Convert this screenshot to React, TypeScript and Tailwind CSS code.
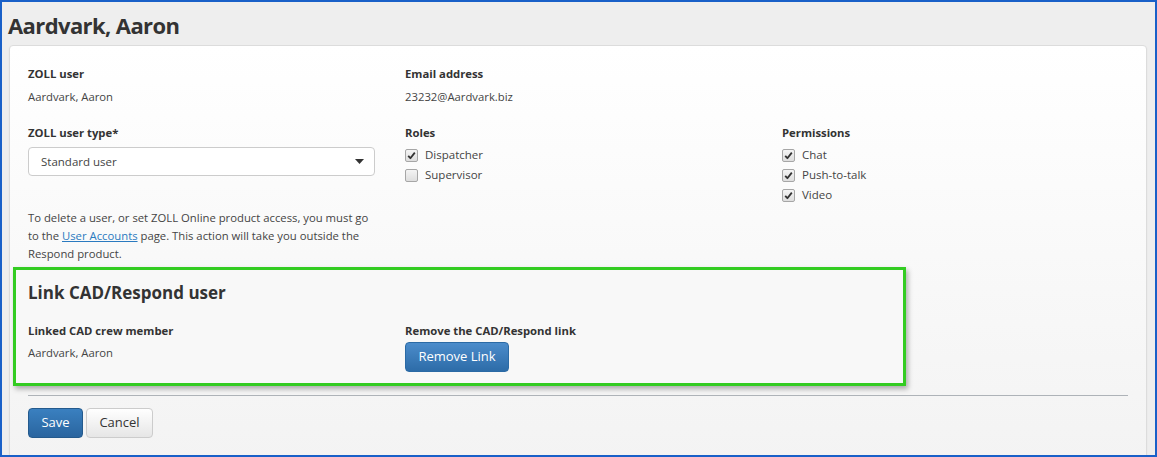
import React from "react";

function Check({ checked }: { checked: boolean }) {
  return (
    <span className="inline-flex h-[13px] w-[13px] items-center justify-center rounded-[2px] border border-[#a6a6a6] bg-gradient-to-b from-[#f4f4f4] to-[#dedede]">
      {checked && (
        <svg width="9" height="9" viewBox="0 0 9 9">
          <path d="M1.2 4.8 L3.4 7.2 L7.8 1.6" fill="none" stroke="#333" strokeWidth="1.8" strokeLinejoin="round" />
        </svg>
      )}
    </span>
  );
}

function CheckRow({ checked, label }: { checked: boolean; label: string }) {
  return (
    <div className="flex h-[20px] items-center gap-[7px]">
      <Check checked={checked} />
      <span className="text-[11.5px] text-[#444]">{label}</span>
    </div>
  );
}

export default function App() {
  return (
    <div
      className="h-[457px] w-[1157px] overflow-hidden border-2 border-[#1960c8] bg-[#eeeeee] text-[#333]"
      style={{ fontFamily: '"Open Sans", "Noto Sans", sans-serif' }}
    >
      <div className="flex h-[43px] items-start pl-[6px] pt-[7px]">
        <h1 className="text-[22px] font-bold leading-[32px] tracking-[-0.6px] text-[#333]">Aardvark, Aaron</h1>
      </div>
      <div className="ml-[7px] mr-[8px] h-[420px] rounded-[4px] border border-[#dcdcdc] bg-gradient-to-b from-white to-[#f3f3f3] pt-[19px] shadow-[0_1px_2px_rgba(0,0,0,0.05)]">
        <div className="grid grid-cols-[377px_377px_1fr] pl-[18px]">
          <div>
            <div className="text-[11.3px] font-bold leading-[18px]">ZOLL user</div>
            <div className="mt-[5px] text-[11.3px] leading-[18px] text-[#444]">Aardvark, Aaron</div>
          </div>
          <div>
            <div className="text-[11.3px] font-bold leading-[18px]">Email address</div>
            <div className="mt-[5px] text-[11.3px] leading-[18px] text-[#444]">23232@Aardvark.biz</div>
          </div>
          <div />
        </div>
        <div className="mt-[18px] grid grid-cols-[377px_377px_1fr] pl-[18px]">
          <div>
            <div className="text-[11.3px] font-bold leading-[18px]">ZOLL user type*</div>
            <div className="mt-[5px] flex h-[29px] w-[347px] items-center justify-between rounded-[4px] border border-[#cccccc] bg-white pl-[12px] pr-[10px]">
              <span className="text-[11.5px] text-[#444]">Standard user</span>
              <svg width="9" height="5" viewBox="0 0 9 5">
                <path d="M0 0 H9 L4.5 5 Z" fill="#333" />
              </svg>
            </div>
            <p className="mt-[33px] w-[345px] text-[11.3px] leading-[18px] text-[#444]">
              To delete a user, or set ZOLL Online product access, you must go to the{" "}
              <a className="text-[#2a7ac0] underline">User Accounts</a> page. This action will take you outside the Respond
              product.
            </p>
          </div>
          <div>
            <div className="text-[11.3px] font-bold leading-[18px]">Roles</div>
            <div className="mt-[3px]">
              <CheckRow checked label="Dispatcher" />
              <CheckRow checked={false} label="Supervisor" />
            </div>
          </div>
          <div>
            <div className="text-[11.3px] font-bold leading-[18px]">Permissions</div>
            <div className="mt-[3px]">
              <CheckRow checked label="Chat" />
              <CheckRow checked label="Push-to-talk" />
              <CheckRow checked label="Video" />
            </div>
          </div>
        </div>

        <div className="ml-[3px] mt-[4px] h-[119px] w-[893px] border-[3px] border-[#33cc22] bg-[#f8f8f8] pl-[12px] pt-[11px] shadow-[2px_3px_5px_rgba(0,0,0,0.3)]">
          <h2 className="text-[17px] font-bold leading-[24px] text-[#333]">Link CAD/Respond user</h2>
          <div className="mt-[17px] grid grid-cols-[377px_1fr]">
            <div>
              <div className="text-[11.3px] font-bold leading-[18px]">Linked CAD crew member</div>
              <div className="mt-[4px] text-[11.3px] leading-[18px] text-[#444]">Aardvark, Aaron</div>
            </div>
            <div>
              <div className="text-[11.3px] font-bold leading-[18px]">Remove the CAD/Respond link</div>
              <button className="mt-[2px] h-[30px] w-[104px] rounded-[4px] border border-[#2b6aa5] bg-gradient-to-b from-[#4b8ccb] to-[#2d6ca8] text-[13px] text-white">
                Remove Link
              </button>
            </div>
          </div>
        </div>

        <div className="ml-[18px] mr-[18px] mt-[9px] h-px bg-[#aeb3b8]" />

        <div className="mt-[12px] flex gap-[3px] pl-[18px]">
          <button className="h-[30px] w-[55px] rounded-[4px] border border-[#245a8d] bg-gradient-to-b from-[#3a80c0] to-[#2a659f] text-[13px] text-white">
            Save
          </button>
          <button className="h-[30px] w-[67px] rounded-[4px] border border-[#cccccc] bg-gradient-to-b from-white to-[#e6e6e6] text-[13px] text-[#333]">
            Cancel
          </button>
        </div>
      </div>
    </div>
  );
}
